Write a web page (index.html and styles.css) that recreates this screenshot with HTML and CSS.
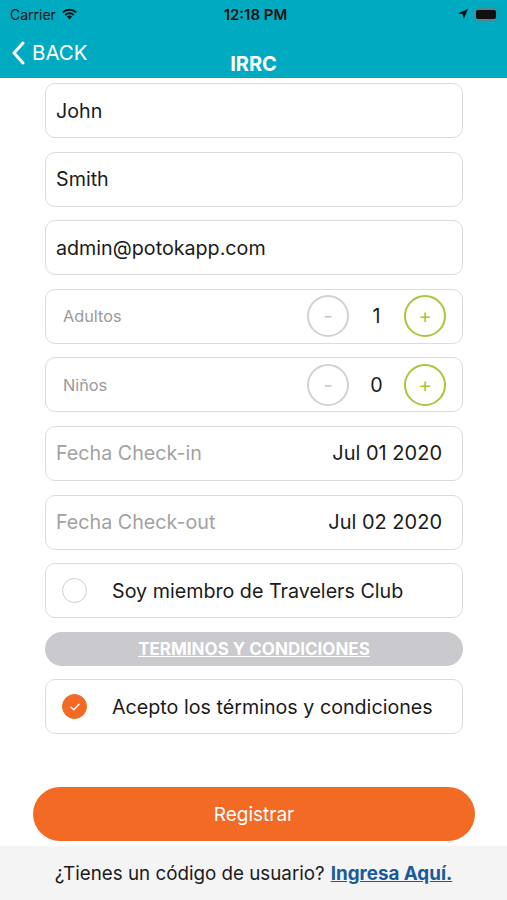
FILE: index.html
```html
<!DOCTYPE html>
<html lang="es">
<head>
  <meta charset="UTF-8">
  <meta name="viewport" content="width=device-width, initial-scale=1.0">
  <title>IRRC - Registro</title>
  <link rel="stylesheet" href="styles.css">
</head>
<body>
  <header class="topbar">
    <div class="status">
      <div class="status-left">
        <span>Carrier</span>
        <svg class="wifi" width="17" height="12" viewBox="0 0 17 12">
          <path d="M8.5 11.5 L5.9 8.6 A3.8 3.8 0 0 1 11.1 8.6 Z" fill="#111"/>
          <path d="M3.6 6.3 A7 7 0 0 1 13.4 6.3 L12.1 7.7 A5.1 5.1 0 0 0 4.9 7.7 Z" fill="#111"/>
          <path d="M1.2 3.8 A10.4 10.4 0 0 1 15.8 3.8 L14.5 5.2 A8.5 8.5 0 0 0 2.5 5.2 Z" fill="#111"/>
        </svg>
      </div>
      <div class="status-time">12:18 PM</div>
      <div class="status-right">
        <svg width="12" height="12" viewBox="0 0 12 12">
          <path d="M11 1 L1 5.2 L5.6 6.3 L6.8 11 Z" fill="#111"/>
        </svg>
        <svg width="27" height="13" viewBox="0 0 27 13">
          <rect x="0.5" y="0.5" width="23" height="12" rx="3.5" fill="none" stroke="#4d8791" stroke-width="1"/>
          <rect x="2" y="2" width="20" height="9" rx="2" fill="#111"/>
          <path d="M25 4.5 A2 2 0 0 1 25 8.5 Z" fill="#4d8791"/>
        </svg>
      </div>
    </div>
    <nav class="navbar">
      <a href="#" class="back">
        <svg width="14" height="24" viewBox="0 0 14 24">
          <path d="M12 2 L3 12 L12 22" fill="none" stroke="#fff" stroke-width="3" stroke-linecap="round" stroke-linejoin="round"/>
        </svg>
        BACK
      </a>
      <h1>IRRC</h1>
    </nav>
  </header>

  <main class="content">
    <form class="form">
      <div class="field"><span class="value">John</span></div>
      <div class="field"><span class="value">Smith</span></div>
      <div class="field"><span class="value">admin@potokapp.com</span></div>

      <div class="field stepper-row">
        <span class="small-label">Adultos</span>
        <div class="stepper">
          <button type="button" class="step minus">-</button>
          <span class="count">1</span>
          <button type="button" class="step plus">+</button>
        </div>
      </div>
      <div class="field stepper-row">
        <span class="small-label">Niños</span>
        <div class="stepper">
          <button type="button" class="step minus">-</button>
          <span class="count">0</span>
          <button type="button" class="step plus">+</button>
        </div>
      </div>

      <div class="field date-row">
        <span class="placeholder">Fecha Check-in</span>
        <span class="date">Jul 01 2020</span>
      </div>
      <div class="field date-row">
        <span class="placeholder">Fecha Check-out</span>
        <span class="date">Jul 02 2020</span>
      </div>

      <div class="field check-row">
        <span class="radio"></span>
        <span class="value">Soy miembro de Travelers Club</span>
      </div>

      <a href="#" class="terms">TERMINOS Y CONDICIONES</a>

      <div class="field check-row">
        <span class="radio checked">
          <svg width="12" height="10" viewBox="0 0 12 10">
            <path d="M2 5.2 L4.8 7.8 L10 2.2" fill="none" stroke="#fff" stroke-width="1.4" stroke-linecap="round" stroke-linejoin="round"/>
          </svg>
        </span>
        <span class="value">Acepto los términos y condiciones</span>
      </div>
    </form>

    <button type="button" class="submit">Registrar</button>
  </main>

  <footer class="footer">
    ¿Tienes un código de usuario? <a href="#">Ingresa Aquí.</a>
  </footer>
</body>
</html>
```

FILE: styles.css
```css
body {
  margin: 0;
  padding: 0;
  width: 507px;
  height: 900px;
  display: flex;
  flex-direction: column;
  background-color: #ffffff;
  font-family: Inter, "Open Sans", Roboto, sans-serif;
  color: #1b1b1b;
  overflow: hidden;
}
/* Teal top area: status bar + nav */
.topbar {
  background-color: #00abc1;
  height: 78px;
  flex-shrink: 0;
}
.status {
  height: 28px;
  display: flex;
  align-items: center;
  justify-content: space-between;
  padding: 0 6px 0 10px;
  font-size: 14px;
  color: #111;
}
.status-left {
  display: flex;
  align-items: center;
  gap: 5px;
  width: 120px;
}
.status-time {
  font-weight: 600;
  font-size: 15px;
}
.status-right {
  display: flex;
  align-items: center;
  justify-content: flex-end;
  gap: 5px;
  width: 120px;
}
.navbar {
  position: relative;
  height: 50px;
}
.navbar .back {
  position: absolute;
  left: 11px;
  top: 12px;
  display: flex;
  align-items: center;
  gap: 7px;
  color: #fff;
  text-decoration: none;
  font-size: 20.5px;
}
.navbar h1 {
  margin: 0;
  padding-top: 24px;
  text-align: center;
  font-size: 20px;
  font-weight: 700;
  color: #fff;
  line-height: 24px;
}
/* Form area */
.content {
  flex: 1;
  display: flex;
  flex-direction: column;
}
.form {
  display: flex;
  flex-direction: column;
  gap: 13.6px;
  margin: 5px 44px 0 45px;
}
.field {
  height: 55px;
  box-sizing: border-box;
  border: 1px solid #dcdcdc;
  border-radius: 10px;
  display: flex;
  align-items: center;
  padding: 0 16px 0 10px;
}
.value {
  font-size: 19.7px;
  color: #1b1b1b;
}
.small-label {
  font-size: 16.3px;
  color: #9a9a9a;
  padding-left: 7px;
}
.stepper-row,
.date-row {
  justify-content: space-between;
}
.stepper {
  display: flex;
  align-items: center;
}
.step {
  width: 42px;
  height: 42px;
  border-radius: 50%;
  background: #fff;
  padding: 0;
  font-family: inherit;
  font-size: 20px;
  line-height: 1;
  cursor: pointer;
}
.step.minus {
  border: 2px solid #d2d2d2;
  color: #c8c8c8;
}
.step.plus {
  border: 2px solid #a6c63c;
  color: #a6c63c;
}
.count {
  width: 55px;
  text-align: center;
  font-size: 19.7px;
}
.placeholder {
  font-size: 19.7px;
  color: #a2a2a2;
}
.date {
  font-size: 20px;
  color: #1b1b1b;
  padding-right: 4px;
}
.check-row {
  gap: 25px;
  padding-left: 16px;
}
.radio {
  width: 25px;
  height: 25px;
  box-sizing: border-box;
  border-radius: 50%;
  border: 1px solid #cfcfcf;
  display: flex;
  align-items: center;
  justify-content: center;
  flex-shrink: 0;
}
.radio.checked {
  background-color: #f36a24;
  border-color: #f36a24;
}
.terms {
  height: 34px;
  border-radius: 17px;
  background-color: #c9c9ce;
  color: #fff;
  font-size: 17px;
  font-weight: 700;
  display: flex;
  align-items: center;
  justify-content: center;
  text-decoration: underline;
}
.submit {
  margin: 53px 32px 0 33px;
  height: 54px;
  border: none;
  border-radius: 27px;
  background-color: #f36a24;
  color: #fff;
  font-family: inherit;
  font-size: 19px;
  cursor: pointer;
}
.footer {
  height: 54px;
  flex-shrink: 0;
  background-color: #f4f4f4;
  display: flex;
  align-items: center;
  justify-content: center;
  gap: 6px;
  font-size: 18.8px;
  color: #1b1b1b;
}
.footer a {
  color: #1a5a98;
  font-weight: 700;
  text-decoration: underline;
}
```
